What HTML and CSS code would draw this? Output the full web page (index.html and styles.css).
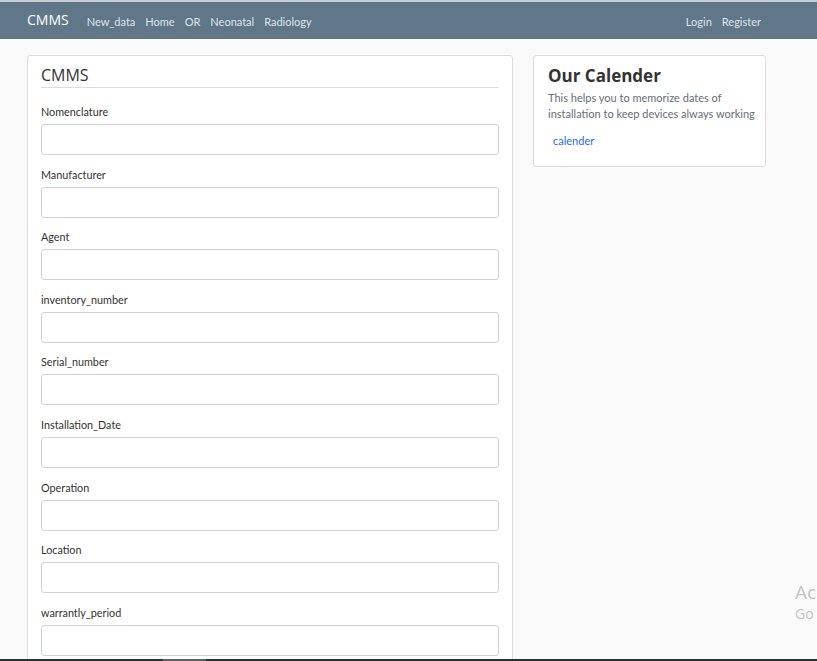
FILE: index.html
```html
<!DOCTYPE html>
<html>
<head>
<meta charset="utf-8">
<link rel="stylesheet" href="styles.css">
</head>
<body>
<div class="topline"></div>
<nav class="navbar">
  <a class="brand" href="#">CMMS</a>
  <ul class="nav-links">
    <li><a href="#">New_data</a></li>
    <li><a href="#">Home</a></li>
    <li><a href="#">OR</a></li>
    <li><a href="#">Neonatal</a></li>
    <li><a href="#">Radiology</a></li>
  </ul>
  <ul class="nav-links nav-right">
    <li><a href="#">Login</a></li>
    <li><a href="#">Register</a></li>
  </ul>
</nav>
<main class="main">
  <section class="card form-card">
    <h2 class="card-title">CMMS</h2>
    <form class="form">
      <div class="field"><label>Nomenclature</label><input type="text"></div>
      <div class="field"><label>Manufacturer</label><input type="text"></div>
      <div class="field"><label>Agent</label><input type="text"></div>
      <div class="field"><label>inventory_number</label><input type="text"></div>
      <div class="field"><label>Serial_number</label><input type="text"></div>
      <div class="field"><label>Installation_Date</label><input type="text"></div>
      <div class="field"><label>Operation</label><input type="text"></div>
      <div class="field"><label>Location</label><input type="text"></div>
      <div class="field"><label>warrantly_period</label><input type="text"></div>
    </form>
  </section>
  <aside class="card side-card">
    <h3 class="side-title">Our Calender</h3>
    <p class="side-text">This helps you to memorize dates of installation to keep devices always working</p>
    <a class="side-link" href="#">calender</a>
  </aside>
</main>
<div class="watermark"><div class="wm-big">Ac</div><div class="wm-small">Go</div></div>
<div class="taskbar"><span class="task-item"></span></div>
</body>
</html>
```
FILE: styles.css
```css
* { box-sizing: border-box; }
html, body { margin: 0; padding: 0; }
body {
  background: #f9f9f9;
  font-family: Lato, "Open Sans", sans-serif;
  color: #333;
  height: 661px;
  overflow: hidden;
}
.topline { height: 2px; background: #c9ccce; }
.navbar {
  height: 37px;
  background: #5f7788;
  display: flex;
  align-items: center;
  padding: 0 27px 2px;
}
.brand {
  color: #fff;
  text-decoration: none;
  font-size: 14px;
  font-family: "Open Sans", sans-serif;
  margin-right: 18px;
}
.nav-links {
  list-style: none;
  margin: 0;
  padding: 0;
  display: flex;
  gap: 10px;
}
.nav-links a {
  color: #dfe5ea;
  text-decoration: none;
  font-size: 11px;
}
.nav-right { margin-left: auto; margin-right: 29px; }
.main {
  display: flex;
  align-items: flex-start;
  gap: 20px;
  padding: 16px 27px 0;
}
.card {
  background: #fff;
  border: 1px solid #dcdcdc;
  border-radius: 3px;
}
.form-card {
  width: 486px;
  padding: 7px 13px 0;
  height: 700px;
}
.card-title {
  margin: 0;
  font-weight: 400;
  font-size: 16px;
  line-height: 24px;
  color: #333;
  font-family: "Open Sans", sans-serif;
  border-bottom: 1px solid #ddd;
}
.form { padding-top: 16px; }
.field { margin-bottom: 11.6px; }
.field label {
  display: block;
  font-size: 10.8px;
  line-height: 16px;
  color: #333;
  margin-bottom: 4px;
}
.field input {
  display: block;
  width: 100%;
  height: 31px;
  border: 1px solid #ced4da;
  border-radius: 3px;
  background: #fff;
}
.side-card {
  width: 233px;
  height: 112px;
  padding: 7px 8px 0 14px;
}
.side-title {
  margin: 0;
  font-size: 17px;
  font-weight: 700;
  line-height: 25px;
  color: #333;
  font-family: "Open Sans", sans-serif;
}
.side-text {
  margin: 2px 0 0;
  font-size: 11px;
  line-height: 16px;
  color: #666e78;
}
.side-link {
  display: inline-block;
  margin: 12px 0 0 5px;
  font-size: 11px;
  color: #1a6bff;
  text-decoration: none;
}
.watermark {
  position: absolute;
  left: 795px;
  top: 580px;
  color: #c4c4c4;
  font-family: "Open Sans", sans-serif;
}
.wm-big { font-size: 19px; line-height: 24px; }
.wm-small { font-size: 14px; line-height: 20px; }
.taskbar {
  position: absolute;
  left: 0;
  top: 659px;
  width: 817px;
  height: 2px;
  background: #23303a;
}
.task-item {
  display: block;
  margin-left: 163px;
  width: 43px;
  height: 2px;
  background: #5a6266;
}
```
